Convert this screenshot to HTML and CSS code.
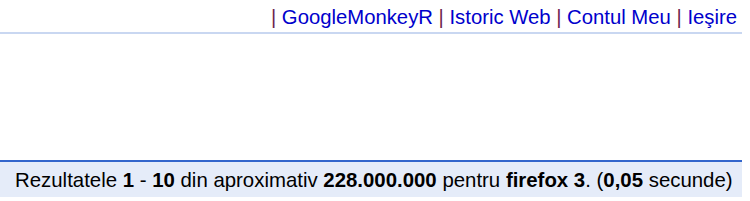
FILE: index.html
```html
<!DOCTYPE html>
<html lang="ro">
<head>
<meta charset="utf-8">
<title>firefox 3 - Căutare Google</title>
<link rel="stylesheet" href="styles.css">
</head>
<body>
<div class="page">
  <div class="topbar">
    <span class="sep">|</span>&nbsp;<a href="#">GoogleMonkeyR</a>&nbsp;<span class="sep">|</span>&nbsp;<a href="#">Istoric Web</a>&nbsp;<span class="sep">|</span>&nbsp;<a href="#">Contul Meu</a>&nbsp;<span class="sep">|</span>&nbsp;<a href="#">Ieşire</a>
  </div>
  <div class="spacer"></div>
  <div class="resbar">
    Rezultatele <b>1</b> - <b>10</b> din aproximativ <b>228.000.000</b> pentru <b>firefox 3</b>. (<b>0,05</b> secunde)
  </div>
</div>
</body>
</html>
```

FILE: styles.css
```css
html, body {
  margin: 0;
  padding: 0;
  background: #ffffff;
}

.page {
  width: 742px;
  font-family: "Liberation Sans", Arial, sans-serif;
  font-size: 20px;
  line-height: 24px;
  color: #000;
}

.topbar {
  display: flex;
  justify-content: flex-end;
  white-space: pre;
  font-size: 20.3px;
  padding: 5px 5px 3px 0;
  border-bottom: 2px solid #c9d7f1;
}

.topbar a {
  color: #0000cc;
  text-decoration: none;
}

.topbar .sep {
  color: #6d2450;
}

.spacer {
  height: 126px;
}

.resbar {
  border-top: 2px solid #3366cc;
  background: #e5ecf9;
  font-size: 20.4px;
  padding: 6px 0 5px 15px;
  white-space: nowrap;
}

.resbar b {
  font-weight: bold;
}
```
